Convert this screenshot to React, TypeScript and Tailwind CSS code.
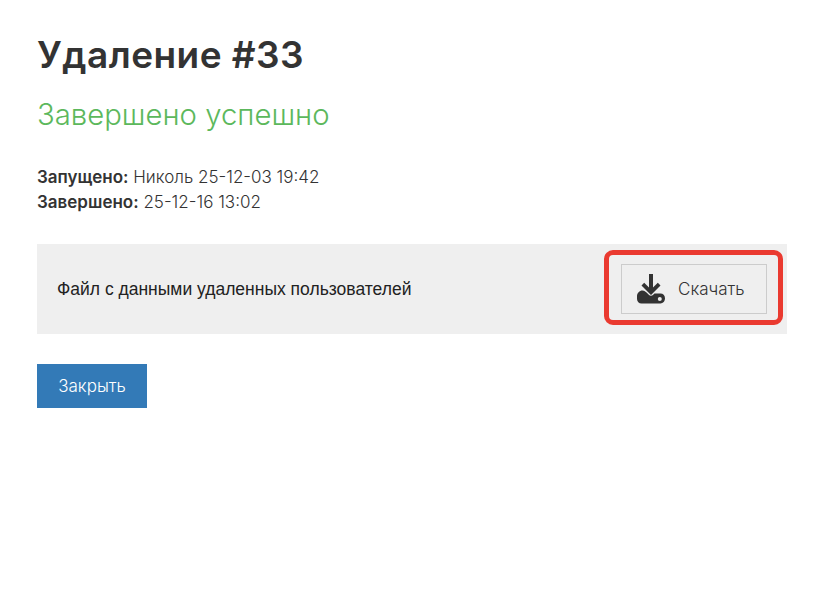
import React from 'react';

function DownloadIcon() {
  return (
    <svg viewBox="0 0 28 30" className="w-7 h-[30px] text-[#333]" fill="currentColor">
      <path d="M12 0h4v13.500l4.800-4.700 2.700 2.700L14 21 4.500 11.500l2.700-2.700 4.800 4.700z" />
      <path fillRule="evenodd" d="M5.500 16.500c1.800 0 3 1 4.300 2.300l2 2c1.200 1.200 3.200 1.200 4.400 0l1.300-1.300h6c2.500 0 4.500 2 4.500 4.800s-2 5.200-4.500 5.200h-19C2 29.500 0 27.500 0 25v-3c0-3 2.500-5.500 5.500-5.500zM22.800 23a2 2 0 1 0 0 4 2 2 0 0 0 0-4z" />
    </svg>
  );
}

export default function App() {
  return (
    <div className="min-h-[613px] bg-white pl-[37px] pr-[34px] pt-[33px] text-[#333] font-['Inter','Noto_Sans',sans-serif]">
      <h1 className="text-[37px] leading-[44px] font-semibold tracking-[0.45px]">Удаление #33</h1>
      <h2 className="mt-[20px] text-[29.300px] leading-[36px] font-light text-[#5cb85c]">Завершено успешно</h2>

      <div className="mt-[32px] text-[17px] leading-[25px] font-light">
        <p><strong className="font-semibold">Запущено:</strong> Николь 25-12-03 19:42</p>
        <p><strong className="font-semibold">Завершено:</strong> 25-12-16 13:02</p>
      </div>

      <div className="mt-[29px] h-[90px] bg-[#efefef] flex items-center justify-between pl-5 pr-5">
        <span className="text-[17.500px] text-[#222] font-['Liberation_Sans',sans-serif]">Файл с данными удаленных пользователей</span>
        <div className="relative">
          <button className="w-[146px] h-[50px] border border-[#ccc] flex items-center pl-[15px] gap-[13px] text-[17px] font-light">
            <DownloadIcon />
            <span className="translate-y-px">Скачать</span>
          </button>
          <div className="absolute -left-[17px] -right-[16px] -top-[14px] -bottom-[11px] border-[5px] border-[#ea3a30] rounded-[9px]" />
        </div>
      </div>

      <button className="mt-[30px] block w-[110px] h-[44px] bg-[#337ab7] text-white text-[17px] font-light">
        <span className="block translate-y-px">Закрыть</span>
      </button>
    </div>
  );
}
